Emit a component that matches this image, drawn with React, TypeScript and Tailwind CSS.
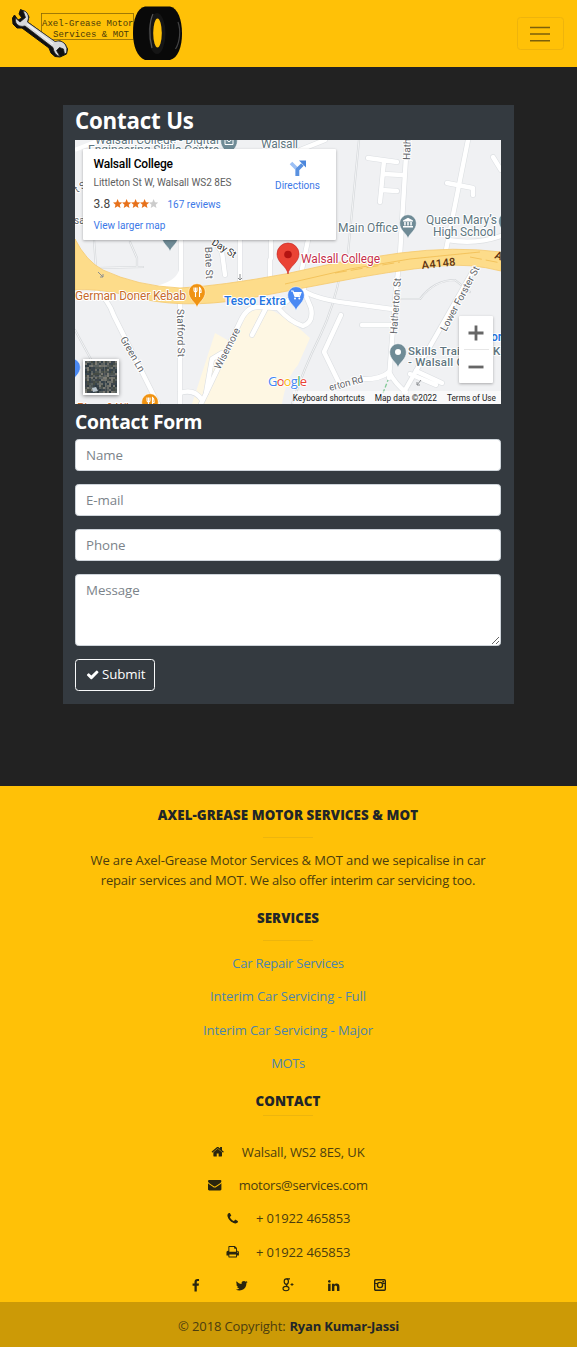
import React from "react";

const FA = {
  check:
    "M1671 566q0 40-28 68l-724 724-136 136q-28 28-68 28t-68-28l-136-136-362-362q-28-28-28-68t28-68l136-136q28-28 68-28t68 28l294 295 656-657q28-28 68-28t68 28l136 136q28 28 28 68z",
  home: "M1472 992v480q0 26-19 45t-45 19h-384v-384h-256v384h-384q-26 0-45-19t-19-45v-480q0-1 .5-3t.5-3l575-474 575 474q1 2 1 6zm223-69l-62 74q-8 9-21 11h-3q-13 0-21-7l-692-577-692 577q-12 8-24 7-13-2-21-11l-62-74q-8-10-7-23.5t11-21.5l719-599q32-26 76-26t76 26l244 204v-195q0-14 9-23t23-9h192q14 0 23 9t9 23v408l219 182q10 8 11 21.5t-7 23.5z",
  envelope:
    "M1792 710v794q0 66-47 113t-113 47h-1472q-66 0-113-47t-47-113v-794q44 49 101 87 362 246 497 345 57 42 92.5 65.5t94.5 48 110 24.5h2q51 0 110-24.5t94.5-48 92.5-65.5q170-123 498-345 57-39 100-87zm0-294q0 79-49 151t-122 123q-376 261-468 325-10 7-42.5 31t-54 38.5-52 32.5-57.5 27-50 9h-2q-23 0-50-9t-57.5-27-52-32.5-54-38.5-42.5-31q-91-64-262-182.5t-205-142.5q-62-42-117-115.5t-55-136.5q0-78 41.5-130t118.5-52h1472q65 0 112.5 47t47.5 113z",
  phone:
    "M1600 1240q0 27-10 70.5t-21 68.5q-21 50-122 106-94 51-186 51-27 0-53-3.5t-57.5-12.5-47-14.5-55.5-20.5-49-18q-98-35-175-83-127-79-264-216t-216-264q-48-77-83-175-3-9-18-49t-20.5-55.5-14.5-47-12.5-57.5-3.5-53q0-92 51-186 56-101 106-122 25-11 68.5-21t70.5-10q14 0 21 3 18 6 53 76 11 19 30 54t35 63.5 31 53.5q3 4 17.5 25t21.5 35.5 7 28.5q0 20-28.5 50t-62 55-62 53-28.5 46q0 9 5 22.5t8.5 20.5 14 24 11.5 19q76 137 174 235t235 174q2 1 19 11.5t24 14 20.5 8.5 22.5 5q18 0 46-28.5t53-62 55-62 50-28.5q14 0 28.5 7t35.5 21.5 25 17.5q25 15 53.5 31t63.5 35 54 30q70 35 76 53 3 7 3 21z",
  print:
    "M448 1536h896v-256h-896v256zm0-640h896v-384h-160q-40 0-68-28t-28-68v-160h-640v640zm1152 64q0-26-19-45t-45-19-45 19-19 45 19 45 45 19 45-19 19-45zm128 0v416q0 13-9.5 22.5t-22.5 9.5h-224v160q0 40-28 68t-68 28h-960q-40 0-68-28t-28-68v-160h-224q-13 0-22.5-9.5t-9.5-22.5v-416q0-79 56.5-135.5t135.5-56.5h64v-544q0-40 28-68t68-28h672q40 0 88 20t76 48l152 152q28 28 48 76t20 88v256h64q79 0 135.5 56.5t56.5 135.5z",
  facebook:
    "M1343 12v264h-157q-86 0-116 36t-30 108v189h293l-39 296h-254v759h-306v-759h-255v-296h255v-218q0-186 104-288.5t277-102.5q147 0 228 12z",
  twitter:
    "M1684 408q-67 98-162 167 1 14 1 42 0 130-38 259.5t-115.5 248.5-184.5 210.5-258 146-323 54.5q-271 0-496-145 35 4 78 4 225 0 401-138-105-2-188-64.5t-114-159.5q33 5 61 5 43 0 85-11-112-23-185.5-111.5t-73.5-205.5v-4q68 38 146 41-66-44-105-115t-39-154q0-88 44-163 121 149 294.5 238.5t371.5 99.5q-8-38-8-74 0-134 94.5-228.5t228.5-94.5q140 0 236 102 109-21 205-78-37 115-142 178 93-10 186-50z",
  linkedin:
    "M477 625v991h-330v-991h330zm21-306q1 73-50.5 122t-135.5 49h-2q-82 0-132-49t-50-122q0-74 51.5-122.5t134.5-48.5 133 48.5 51 122.5zm1166 729v568h-329v-530q0-105-40.5-164.5t-126.5-59.5q-63 0-105.5 34.5t-63.5 85.5q-11 30-11 81v553h-329q2-399 2-647t-1-296l-1-48h329v144h-2q20-32 41-56t56.5-52 87-43.5 114.5-15.5q171 0 275 113.5t104 332.5z",
};

function Icon({ d, className = "size-[13.4px]" }: { d: string; className?: string }) {
  return (
    <svg viewBox="0 0 1792 1792" className={className} fill="currentColor">
      <path d={d} />
    </svg>
  );
}

function Logo() {
  return (
    <svg width="184" height="67" viewBox="0 0 184 67">
      <rect x="41.5" y="13.5" width="92" height="26" fill="none" stroke="#8a6906" strokeWidth="0.8" />
      <g fontFamily="'Liberation Mono', monospace" fontSize="9" fill="#49390a">
        <text x="42" y="26.3" textLength="91.5">Axel-Grease Motor</text>
        <text x="53" y="37.3" textLength="76">Services &amp; MOT</text>
      </g>
      <path
        d="M20.500 9.500 L26 12 L29 17 L27.500 22 L55 42 L60 41 L65 44 L67.500 49 L66.500 54 L60 57 L55 56.500 L51 53 L49 48 L22 28 L17 28 L13 24 L12.500 18 L14.500 15 L18 20 L22 18 L19 14 Z"
        fill="#111"
        stroke="#111"
        strokeWidth="1"
        strokeLinejoin="round"
      />
      <path
        d="M23 10.500 Q28.500 12 28.500 18 L27.500 22 L55 41.500 Q61 39.500 65 44 Q68 48 66.500 53 L64.500 54 L63.500 49 L59.500 47.500 L56.500 50.500 L60 56.500 Q54 55 53 47.500 L25 26 Q19 27.500 16 23 Q15 20 15.500 18 L20 22 L25.500 17.500 Z"
        fill="#d9dadb"
        stroke="#222"
        strokeWidth="0.800"
        strokeLinejoin="round"
      />
      <path d="M27 24 L53 44" stroke="#f2f2f2" strokeWidth="1.500" />
      <path
        d="M145 6.500 H170 C178 8 182 20 182 33.500 C182 47 178 58 170 60 H145 C137 57 133 46 133 33 C133 20 137 8 145 6.500 Z"
        fill="#090909"
      />
      <ellipse cx="157" cy="33.500" rx="8.500" ry="20.500" fill="#151515" />
      <path d="M153 14 C149.500 21 148.500 35 152 48" stroke="#555" strokeWidth="1.200" fill="none" />
      <ellipse cx="157.500" cy="33" rx="4.300" ry="14.500" fill="#ffc107" />
      <path d="M175.500 49 C180 42 181 30 178 22" stroke="#444" strokeWidth="1.200" fill="none" />
    </svg>
  );
}

type PinProps = { x: number; y: number; fill: string; kind: "food" | "cart" | "bank" | "dot" | "mail" };

function Pin({ x, y, fill, kind }: PinProps) {
  return (
    <g transform={`translate(${x} ${y})`}>
      <path
        d="M0 15.500 C-1.500 10 -8.300 7.500 -8.300 0 A8.300 8.300 0 1 1 8.300 0 C8.300 7.500 1.500 10 0 15.500Z"
        fill={fill}
        stroke="#fff"
        strokeWidth="0.5"
      />
      {kind === "dot" && <circle r="3" fill="#fff" />}
      {kind === "mail" && <path d="M-4-2.500h8v6h-8zl4 3.500 4-3.500" stroke="#fff" fill="none" />}
      {kind === "food" && (
        <path d="M-3 -4.500v3q0 1.500 1.500 1.500t1.500-1.500v-3M-1.500-4.500v9.500M2.500 5v-9.500q2 1.500 1.500 5h-1.500" stroke="#fff" strokeWidth="1.100" fill="none" />
      )}
      {kind === "cart" && (
        <g>
          <path d="M-5-4h2l2 5.500h4.500l1.500-4h-7" stroke="#fff" strokeWidth="1.200" fill="none" />
          <path d="M-2.500-3h7l-1.300 4h-4.500z" fill="#fff" />
          <circle cx="-1" cy="3.500" r="1" fill="#fff" />
          <circle cx="3.300" cy="3.500" r="1" fill="#fff" />
        </g>
      )}
      {kind === "bank" && (
        <g fill="#fff">
          <path d="M-5-2.500 0-5.300 5-2.500v1H-5zM-5 3H5v1.500H-5z" />
          <path d="M-3.800-1h1.500v3.500h-1.500zM-.75-1h1.500v3.500h-1.500zM2.300-1h1.500v3.500h-1.500z" />
        </g>
      )}
    </g>
  );
}

const ROADS = [
  "M181 240V272Q180 300 180 330V404",
  "M97 292Q108 299 114 316L158 404",
  "M201 404L240 322Q247 306 259 307L278 308Q290 322 303 326Q314 322 311 308L304 291",
  "M278 308L304 288",
  "M266 308L252 335",
  "M407 140L400 255L396 290L389 378",
  "M468 140L446 250",
  "M478 262L404 392",
  "M304 291Q318 300 355 304L392 309",
  "M308 240L301 274",
  "M325 140L300 150",
  "M341 315L324 352L340 385",
  "M362 325H390",
  "M360 379Q380 380 389 372Q396 385 406 392",
  "M213 240L222 252L225 275",
  "M240 240L240 280",
  "M270 260L270 278M271 258V240",
  "M180 393Q194 388 202 400M206 393L212 359L222 353",
  "M448 240Q475 245 501 236",
  "M447 183L473 188V195",
  "M368 158L397 162M384 161L380 202M383 174L403 175M381 190L397 191",
  "M493 157L501 170M410 374L436 385M416 371L442 383",
];

const THIN = [
  "M359 140L348 253",
  "M341 270Q334 307 320 336Q304 368 292 404",
  "M94 240L96 268L143 267M130 242L137 258V267",
  "M399 299H420Q434 280 455 280L470 292",
  "M483 253L501 265",
  "M75 330L94 365",
];

function RoadMap() {
  return (
    <svg width="426" height="264" viewBox="75 140 426 264" className="block">
      <rect x="75" y="140" width="426" height="264" fill="#f0f1f3" />
      <path d="M215 333L231 342L253 303Q280 310 310 338L298 365Q286 378 282 404H192Z" fill="#fef7e3" />
      <g fill="none" strokeLinejoin="round" strokeLinecap="round">
        {THIN.map((d) => (
          <path key={d} d={d} stroke="#d4d7da" strokeWidth="2.200" />
        ))}
        {THIN.map((d) => (
          <path key={`${d}c`} d={d} stroke="#f3f4f5" strokeWidth="1" />
        ))}
        {ROADS.map((d) => (
          <path key={`${d}o`} d={d} stroke="#dcdfe2" strokeWidth="5.600" />
        ))}
        {ROADS.map((d) => (
          <path key={d} d={d} stroke="#fff" strokeWidth="4.400" />
        ))}
      </g>
      <path d="M75 150Q90 144 100 140" stroke="#fff" strokeWidth="4" fill="none" />
      <path d="M152 287Q176 282 179 270H182V290Z" fill="#fff" />
      <path
        d="M75 239Q86 261 103 270Q137 286 180 288Q220 286 285 274L340 262L400 253Q455 246 501 252V271Q470 263 440 266Q390 271 335 282L245 299Q180 310 130 296Q98 288 75 290Z"
        fill="#fddc8a"
        stroke="#f5c96d"
        strokeWidth="0.800"
      />
      <g fill="none" stroke="#f0bd50" strokeWidth="0.800">
        <path d="M285 284L350 269L410 259L480 252" />
        <path d="M335 273L400 262M470 257L501 263" strokeDasharray="12 4" />
      </g>
      <path d="M98 272l5 5m0-3v3h-3M240 274v6m-2-2 2 2 2-2M421 380l-4 5m0-3v3h3" stroke="#8a8d90" fill="none" />
      <path d="M383 393l5-13" stroke="#81c995" strokeWidth="1.300" strokeDasharray="4 2" />

      <g fontFamily="Roboto, 'Liberation Sans', sans-serif" stroke="#fff" strokeWidth="2" paintOrder="stroke" strokeLinejoin="round">
        <g fill="#607680" fontSize="12">
          <text x="95" y="143.500" textLength="124">Walsall College - Digital</text>
          <text x="88" y="153.500" textLength="131">Engineering Skills Centre</text>
          <text x="261" y="147.500" textLength="37">Walsall</text>
        </g>
        <g fill="#5f6469" fontSize="10">
          <text transform="translate(410 160) rotate(-88)">Hath</text>
          <text transform="translate(77 193) rotate(-32)">t St</text>
          <text x="74" y="224">sa</text>
          <text transform="translate(205 247) rotate(88)" textLength="32">Bate St</text>
          <text transform="translate(211 244) rotate(32)" textLength="27" fill="#333">Day St</text>
          <text transform="translate(177 309) rotate(89)" textLength="48">Stafford St</text>
          <text transform="translate(120 339) rotate(60)" textLength="39">Green Ln</text>
          <text transform="translate(220 370) rotate(-63)" textLength="45">Wisemore</text>
          <text transform="translate(397 334) rotate(-86)" textLength="56">Hatherton St</text>
          <text transform="translate(446 332) rotate(-62)" textLength="72">Lower Forster St</text>
          <text transform="translate(330 391) rotate(-15)" textLength="35">erton Rd</text>
        </g>
        <g fill="#607680" fontSize="12">
          <text x="338" y="231.500" textLength="60">Main Office</text>
          <text x="426" y="223.500" textLength="71">Queen Mary’s</text>
          <text x="433" y="235.500" textLength="63">High School</text>
          <g fontWeight="500" fontSize="11.500">
            <text x="408" y="354.500" textLength="52">Skills Trai</text>
            <text x="493" y="354.500">K</text>
            <text x="408" y="366" textLength="56">- Walsall C</text>
          </g>
        </g>
        <text x="75" y="300" textLength="111" fill="#c66a2a" fontSize="12">German Doner Kebab</text>
        <text x="77" y="411.500" textLength="52" fill="#c66a2a" fontSize="12">Pizza &amp; Wi</text>
        <text x="224" y="304.500" textLength="62" fill="#2374e1" fontSize="12" fontWeight="500">Tesco Extra</text>
        <text x="301" y="262.500" textLength="79" fill="#c52f4a" fontSize="12">Walsall College</text>
        <text transform="translate(422 269) rotate(-6)" textLength="34" fill="#5c3211" fontSize="11" fontWeight="500" strokeWidth="0">A4148</text>
        <text transform="translate(494 258) rotate(20)" fill="#5c3211" fontSize="11" fontWeight="500" strokeWidth="0">A</text>
        <text x="491" y="341" fill="#2374e1" fontSize="12" fontWeight="500">or</text>
      </g>

      <Pin x={229} y={141} fill="#6f8b96" kind="mail" />
      <Pin x={170} y={236} fill="#6f8b96" kind="dot" />
      <Pin x={408} y={223} fill="#6f8b96" kind="bank" />
      <Pin x={398} y={352} fill="#6f8b96" kind="dot" />
      <Pin x={507} y={221} fill="#6f8b96" kind="dot" />
      <Pin x={197} y={292} fill="#f09312" kind="food" />
      <Pin x={150} y={402} fill="#f09312" kind="food" />
      <Pin x={296} y={295} fill="#4a89f3" kind="cart" />
      <Pin x={72} y={367} fill="#4a89f3" kind="dot" />
      <path
        d="M288 274C287 266 277 263 277 254A11 11 0 1 1 299 254C299 263 289 266 288 274Z"
        fill="#ea4335"
        stroke="#c5221f"
        strokeWidth="0.600"
      />
      <circle cx="288" cy="254.500" r="3.800" fill="#b31412" />
    </svg>
  );
}

const SHADES = ["#3e454b", "#59605f", "#2f3a40", "#6d6f69", "#4b5350", "#37434b", "#7b7a72", "#454b44"];

function SatelliteThumb() {
  const cells: React.ReactNode[] = [];
  let seed = 7;
  for (let i = 0; i < 256; i++) {
    seed = (seed * 1103515 + 12345) % 2147483;
    const shade = SHADES[Math.floor(seed / 97) % SHADES.length];
    cells.push(<rect key={i} x={(i % 16) * 2} y={Math.floor(i / 16) * 2} width="2.100" height="2.100" fill={shade} />);
  }
  return (
    <svg width="32" height="32" viewBox="0 0 32 32" className="block">
      {cells}
      <path d="M19 0L21 32M0 17L32 14" stroke="#8a8a83" strokeWidth="0.700" opacity="0.700" />
      <path d="M7 27l4-1 2 4-5 1z" fill="#b8c4cc" />
    </svg>
  );
}

function Star({ fill }: { fill: string }) {
  return (
    <svg width="9.200" height="9.200" viewBox="0 0 24 24" fill={fill}>
      <path d="M12 0l3.500 8.300 8.500.8-6.500 5.800 2 8.700L12 19l-7.500 4.600 2-8.700L0 9.100l8.500-.8z" />
    </svg>
  );
}

function MapPanel() {
  return (
    <div className="relative h-[264px] w-[426px] overflow-hidden font-[Roboto,sans-serif]">
      <RoadMap />
      <div className="absolute left-[8px] top-[9px] flex h-[91px] w-[253px] justify-between rounded-[1px] bg-white pl-[10.500px] pr-[16px] shadow-[0_1px_3px_rgba(0,0,0,0.3)]">
        <div className="flex flex-col whitespace-nowrap pt-[7px]">
          <div className="h-[17px] text-[12px] font-medium leading-[16px] tracking-[-0.180px] text-black">Walsall College</div>
          <div className="h-[20px] text-[10px] leading-[19px] text-[#5e5e5e]">Littleton St W, Walsall WS2 8ES</div>
          <div className="flex h-[22px] items-center text-[10px] text-[#3b78e7]">
            <span className="w-[19px] text-[12px] text-[#444]">3.8</span>
            <span className="flex w-[55px]">
              <Star fill="#e7711b" />
              <Star fill="#e7711b" />
              <Star fill="#e7711b" />
              <Star fill="#e7711b" />
              <Star fill="#ccc" />
            </span>
            <span>167 reviews</span>
          </div>
          <div className="h-[21px] text-[10px] leading-[21px] text-[#3b78e7]">View larger map</div>
        </div>
        <div className="flex flex-col items-center pt-[10px] text-[10px] leading-[17px] text-[#3b78e7]">
          <svg width="18" height="18" viewBox="0 0 18 18">
            <path d="M2 4L8 10V17" stroke="#9cc0f5" strokeWidth="3.600" fill="none" />
            <path d="M8.500 17V10.500L13.500 5.500" stroke="#5a91df" strokeWidth="3.600" fill="none" />
            <path d="M10 1.500H17V8.500Z" fill="#4a86dc" />
          </svg>
          <span>Directions</span>
        </div>
      </div>
      <div className="absolute left-[8px] top-[219px] border-2 border-white shadow-[0_1px_4px_rgba(0,0,0,0.45)]">
        <SatelliteThumb />
      </div>
      <div className="absolute left-[384px] top-[176px] flex h-[67px] w-[34px] flex-col items-center rounded-[1px] bg-white shadow-[0_1px_3px_rgba(0,0,0,0.3)]">
        <div className="flex h-[33px] items-center">
          <svg width="16" height="16" viewBox="0 0 16 16" stroke="#666" strokeWidth="2.800">
            <path d="M.5 8h15M8 .5v15" />
          </svg>
        </div>
        <div className="h-px w-[25px] bg-[#e6e6e6]" />
        <div className="flex h-[33px] items-center">
          <svg width="16" height="16" viewBox="0 0 16 16" stroke="#666" strokeWidth="2.800">
            <path d="M.5 8h15" />
          </svg>
        </div>
      </div>
      <svg width="44" height="20" viewBox="0 0 44 20" className="absolute left-[192px] top-[232px]">
        <text x="1" y="14" textLength="39" fontFamily="'Open Sans', sans-serif" fontSize="13" fontWeight="500" stroke="#fff" strokeWidth="1.500" paintOrder="stroke">
          <tspan fill="#4285f4">G</tspan>
          <tspan fill="#ea4335">o</tspan>
          <tspan fill="#fbbc05">o</tspan>
          <tspan fill="#4285f4">g</tspan>
          <tspan fill="#34a853">l</tspan>
          <tspan fill="#ea4335">e</tspan>
        </text>
      </svg>
      <div className="absolute bottom-0 right-0 flex h-[13px] items-center gap-[10px] whitespace-nowrap bg-white/60 pr-[5px] text-[8.300px] leading-[12px] text-[#222]">
        <span>Keyboard shortcuts</span>
        <span>Map data ©2022</span>
        <span>Terms of Use</span>
      </div>
    </div>
  );
}

const FIELD =
  "block w-full rounded-[3.500px] border border-[#ced4da] bg-white px-[10px] text-[13.300px] tracking-[-0.080px] text-[#495057] placeholder:text-[#7b838a] placeholder:opacity-100 outline-none";

function ContactCard() {
  return (
    <section className="ml-[62.500px] mt-[38px] h-[599px] w-[451px] bg-[#343a40] pl-[12.500px] pr-[12.500px] text-white">
      <h1 className="h-[35px] text-[22.300px] font-bold leading-[31px] tracking-[-0.200px]">Contact Us</h1>
      <MapPanel />
      <h2 className="h-[35px] text-[19.300px] font-bold leading-[35px] tracking-[-0.270px]">Contact Form</h2>
      <form className="flex flex-col items-start">
        <input className={`${FIELD} mb-[13px] h-[32px]`} placeholder="Name" />
        <input className={`${FIELD} mb-[13px] h-[32px]`} placeholder="E-mail" />
        <input className={`${FIELD} mb-[13px] h-[32px]`} placeholder="Phone" />
        <textarea className={`${FIELD} mb-[13px] h-[72px] pt-[5px] leading-[20px]`} placeholder="Message" />
        <button
          type="button"
          className="flex h-[32px] w-[80px] items-center justify-center gap-[3px] rounded-[3.500px] border border-[#f8f9fa] pl-[1px] text-[13.300px] tracking-[-0.100px]"
        >
          <Icon d={FA.check} />
          Submit
        </button>
      </form>
    </section>
  );
}

function Divider({ className }: { className: string }) {
  return <div className={`${className} h-px w-[50px] bg-[#edb50d]`} />;
}

const HEADING = "h-[20px] text-[13.300px] font-extrabold leading-[20px] tracking-[0.090px] uppercase text-[#212529]";

function ContactRow({ icon, children }: { icon: string; children: React.ReactNode }) {
  return (
    <div className="flex h-[20px] items-center gap-[17px]">
      <span className="text-[#29250f]">
        <Icon d={icon} />
      </span>
      <span>{children}</span>
    </div>
  );
}

function Footer() {
  return (
    <footer className="mt-[82px] flex h-[561px] flex-col items-center bg-[#ffc107] pt-[19px] text-[13px] leading-[20px] tracking-[-0.120px] text-[#4b3d0f]">
      <div className="flex flex-col items-center pr-[1px]">
        <h3 className={HEADING}>Axel-Grease Motor Services &amp; MOT</h3>
        <Divider className="mt-[12px]" />
        <p className="mt-[12px] whitespace-nowrap text-center">
          We are Axel-Grease Motor Services &amp; MOT and we sepicalise in car
          <br />
          <span className="tracking-[-0.185px]">repair services and MOT. We also offer interim car servicing too.</span>
        </p>
        <h3 className={`${HEADING} mt-[18px]`}>Services</h3>
        <Divider className="mt-[12px]" />
        <nav className="mt-[12px] flex flex-col items-center gap-[13.400px] tracking-[-0.070px] text-[#4d84ad]">
          <a className="tracking-[-0.230px]">Car Repair Services</a>
          <a>Interim Car Servicing - Full</a>
          <a>Interim Car Servicing - Major</a>
          <a className="tracking-[-0.400px]">MOTs</a>
        </nav>
        <h3 className={`${HEADING} mt-[18px]`}>Contact</h3>
        <Divider className="mt-[4px]" />
        <div className="mt-[25.500px] flex flex-col items-center gap-[13.400px]">
          <ContactRow icon={FA.home}>Walsall, WS2 8ES, UK</ContactRow>
          <ContactRow icon={FA.envelope}>
            <span className="tracking-[-0.220px]">motors@services.com</span>
          </ContactRow>
          <ContactRow icon={FA.phone}>+ 01922 465853</ContactRow>
          <ContactRow icon={FA.print}>+ 01922 465853</ContactRow>
        </div>
        <div className="mt-[13.500px] flex h-[20px] w-[198px] items-center justify-between text-[#29250f]">
          <Icon d={FA.facebook} />
          <Icon d={FA.twitter} />
          <svg width="14" height="14" viewBox="0 0 14 14" fill="none" stroke="currentColor">
            <ellipse cx="5.300" cy="3.600" rx="2.100" ry="2.700" strokeWidth="1.200" />
            <ellipse cx="5" cy="10.600" rx="3" ry="2.200" strokeWidth="1.100" />
            <path d="M5.500.9H9M6.500 6Q4.500 7.200 6.500 8.500" strokeWidth="1.100" />
            <path d="M9.500 6.500h3M11 5v3" strokeWidth="0.900" />
          </svg>
          <Icon d={FA.linkedin} />
          <svg width="14" height="14" viewBox="0 0 14 14" fill="none" stroke="currentColor">
            <rect x="1.700" y="1.700" width="10.600" height="10.600" rx="1" strokeWidth="1.400" />
            <circle cx="7" cy="7" r="2.600" strokeWidth="1.400" />
            <path d="M1.700 5.500H4M10 5.500h2.300" strokeWidth="1" />
            <rect x="9.300" y="3" width="1.700" height="1.500" fill="currentColor" stroke="none" />
          </svg>
        </div>
      </div>
      <div className="mt-auto flex h-[45px] w-full items-center justify-center gap-[4px] bg-[#cc9a06] pt-[2px] text-[#4b3d0f]">
        <span>© 2018 Copyright:</span>
        <span className="font-bold tracking-[-0.200px] text-[#212529]">Ryan Kumar-Jassi</span>
      </div>
    </footer>
  );
}

export default function App() {
  return (
    <div className="flex h-[1347px] w-[577px] flex-col overflow-hidden bg-[#222222] font-['Open_Sans','Noto_Sans',sans-serif]">
      <header className="flex h-[67px] shrink-0 items-center justify-between bg-[#ffc107] pr-[13px]">
        <Logo />
        <button type="button" className="flex h-[33px] w-[47px] items-center justify-center rounded-[3.500px] border border-[#eeb40c] pr-[1px]">
          <svg width="20" height="16" viewBox="0 0 20 16" stroke="#7c600b" strokeWidth="1.400">
            <path d="M0 1.500h20M0 8h20M0 14.700h20" />
          </svg>
        </button>
      </header>
      <ContactCard />
      <Footer />
    </div>
  );
}
